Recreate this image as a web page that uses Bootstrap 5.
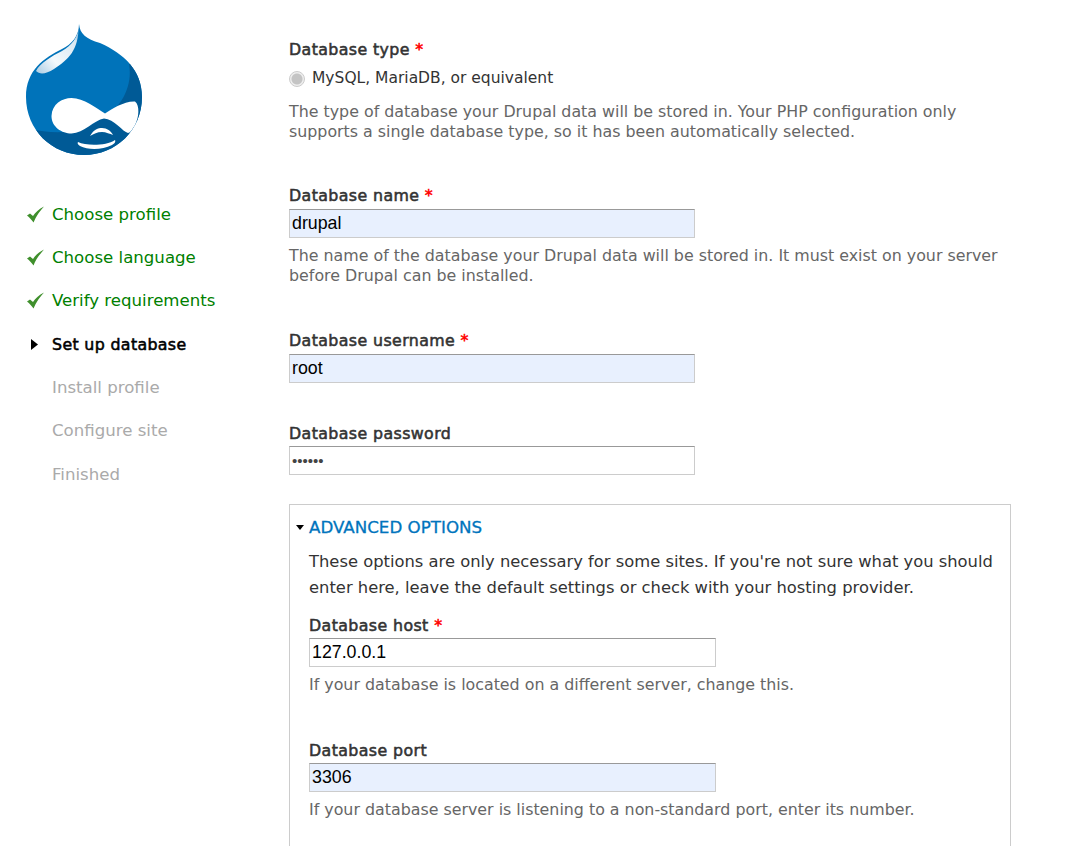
<!DOCTYPE html>
<html lang="en"><head><meta charset="utf-8"><title>Set up database</title>
<link href="https://cdn.jsdelivr.net/npm/bootstrap@5.3.0/dist/css/bootstrap.min.css" rel="stylesheet">
<style>
html,body{height:846px;overflow:hidden;background:#fff}
body{font-family:"DejaVu Sans",sans-serif;font-size:15.85px;color:#333}
.shell{height:846px;overflow:hidden}
.side{width:289px;flex:none;padding:24px 0 0 26px}
.logo{display:block;width:117px;height:132px}
.steps{list-style:none;margin:36.8px 0 0;padding:0}
.steps li{height:43.33px;line-height:43.33px;font-size:16.6px;color:#aaa;padding-left:26px;position:relative;white-space:nowrap}
.steps li.ok{color:#008000}
.steps li.now{color:#000;font-size:15.8px;letter-spacing:.35px;-webkit-text-stroke:.55px #000}
.steps svg{position:absolute;left:0;top:13px}
.main{width:722px;flex:none;padding-top:40px}
.lbl{display:block;font-weight:400;font-size:15.8px;letter-spacing:.4px;-webkit-text-stroke:.55px #333;line-height:19px;margin:0 0 4px;color:#333}
.lbl.tight{margin-bottom:3px}
.req{color:#f00;-webkit-text-stroke:.55px #f00}
.field{display:block;width:406px;height:29px;border:1px solid #ccc;border-top-color:#999;padding:0 2px;font:17.8px/27px "Liberation Sans",sans-serif;color:#000;background:#fff;border-radius:0;outline:0}
.field.fill{background:#e8f0fe}
.field.wide{width:407px}
.field.pass{font-size:15px;color:#444}
.note{font-size:15.85px;line-height:19.5px;color:#666;margin:0;white-space:nowrap}
.radio-row{display:flex;align-items:center;gap:7px;margin-top:10px;height:20px;color:#333;font-size:15.5px}
.radio-dot{width:16px;height:16px;border-radius:50%;border:1px solid #ccc;background:radial-gradient(circle,#c4c4c4 0 5px,#eee 6px);flex:none}
.gap-a{margin-top:13px}.gap-b{margin-top:45px}.gap-c{margin-top:46px}
.gap-e{margin-top:41px}
.box{border:1px solid #ccc;border-bottom:0;margin-top:29px;padding:12px 18px 0 19px;height:600px;width:722px}
.box-head{display:flex;align-items:center;color:#0074bd;font-size:16.7px;line-height:20px;margin-left:-13px;gap:5px;-webkit-text-stroke:.3px #0074bd}
.caret{width:0;height:0;border:4.5px solid transparent;border-top:5px solid #000;border-bottom:0;flex:none}
.intro{font-size:16.35px;line-height:26px;margin:12px 0 0;color:#333;white-space:nowrap}
.mt-host{margin-top:15px}.mt-port{margin-top:46px}
.hint{margin-top:8px}
</style></head>
<body>
<div class="shell d-flex">
<aside class="side">
<svg class="logo" viewBox="0 0 117 132" aria-label="Drupal logo">
<defs><clipPath id="c"><path d="M53 0C54 10 60 15 74 19 98 30 116 46 116 73c0 33-26 58-58 58S0 106 0 73C0 46 18 34 36 25 46 20 53 12 53 0z"/></clipPath>
<linearGradient id="h" x1="0" y1="1" x2="1" y2="0"><stop offset="0" stop-color="#a9cbe3"/><stop offset=".35" stop-color="#f4f9fc"/><stop offset=".8" stop-color="#d8e8f3"/><stop offset="1" stop-color="#5da2cf"/></linearGradient></defs>
<path d="M53 0C54 10 60 15 74 19 98 30 116 46 116 73c0 33-26 58-58 58S0 106 0 73C0 46 18 34 36 25 46 20 53 12 53 0z" fill="#0073ba"/>
<g clip-path="url(#c)">
<path d="M103 40C107 62 96 86 70 98 52 110 28 110 3 105L0 140 125 140 125 40z" fill="#005a96"/>
<path d="M52.500 2C52 14 46 21 36 27 26 32 14 39 10 47 14 51 20 50 28 45 42 36 53 26 52.500 2z" fill="url(#h)"/>
</g>
<path d="M25.500 92C26 80 36 74 45.500 74 58 74 70 84 79 89.500 86 85 98 77 109 77.500 114 81 113 94 109 101 106 106 104 109 102 109 97 108 88 95 78 94.500 68 96 58 109 45.500 109.500 36 109.500 25.500 103 25.500 92z" fill="#fff"/>
<path d="M64 112C68 105 72 104 76 104 81 104 85 107 87 111 84 110 80 108 76 108 71 108 68 110 64 112z" fill="#fff"/>
<path d="M52 118C60 122 80 122 89 116 90 118 88 120 86 121 76 126 62 126 54 122 52 121 51 119 52 118z" fill="#fff"/>
</svg>
<ul class="steps">
<li class="ok"><svg width="19" height="17" viewBox="0 0 19 17"><path d="M1 9.500 4 7.500 7 10C9 6.500 13 3 18 0.500 14 5 10 10 7.500 16.500 5.500 13.500 3.500 11.500 1 9.500z" fill="#3f8f2c"/></svg>Choose profile</li>
<li class="ok"><svg width="19" height="17" viewBox="0 0 19 17"><path d="M1 9.500 4 7.500 7 10C9 6.500 13 3 18 0.500 14 5 10 10 7.500 16.500 5.500 13.500 3.500 11.500 1 9.500z" fill="#3f8f2c"/></svg>Choose language</li>
<li class="ok"><svg width="19" height="17" viewBox="0 0 19 17"><path d="M1 9.500 4 7.500 7 10C9 6.500 13 3 18 0.500 14 5 10 10 7.500 16.500 5.500 13.500 3.500 11.500 1 9.500z" fill="#3f8f2c"/></svg>Verify requirements</li>
<li class="now"><svg width="19" height="17" viewBox="0 0 19 17"><path d="M5 3l7 5.500-7 5.500z" fill="#000"/></svg>Set up database</li>
<li>Install profile</li>
<li>Configure site</li>
<li>Finished</li>
</ul>
</aside>
<main class="main">
<span class="lbl">Database type <span class="req">*</span></span>
<div class="radio-row"><span class="radio-dot"></span>MySQL, MariaDB, or equivalent</div>
<p class="note gap-a">The type of database your Drupal data will be stored in. Your PHP configuration only<br>supports a single database type, so it has been automatically selected.</p>
<label class="lbl gap-b">Database name <span class="req">*</span></label>
<input class="field fill" value="drupal" readonly>
<p class="note hint">The name of the database your Drupal data will be stored in. It must exist on your server<br>before Drupal can be installed.</p>
<label class="lbl gap-c">Database username <span class="req">*</span></label>
<input class="field fill" value="root" readonly>
<label class="lbl tight gap-e">Database password</label>
<input class="field pass" type="password" value="secret" readonly>
<section class="box">
<div class="box-head"><span class="caret"></span>ADVANCED OPTIONS</div>
<p class="intro">These options are only necessary for some sites. If you're not sure what you should<br>enter here, leave the default settings or check with your hosting provider.</p>
<label class="lbl tight mt-host">Database host <span class="req">*</span></label>
<input class="field wide" value="127.0.0.1" readonly>
<p class="note hint">If your database is located on a different server, change this.</p>
<label class="lbl tight mt-port">Database port</label>
<input class="field wide fill" value="3306" readonly>
<p class="note hint">If your database server is listening to a non-standard port, enter its number.</p>
</section>
</main>
</div>
<script src="https://cdn.jsdelivr.net/npm/bootstrap@5.3.0/dist/js/bootstrap.bundle.min.js"></script>
</body></html>
